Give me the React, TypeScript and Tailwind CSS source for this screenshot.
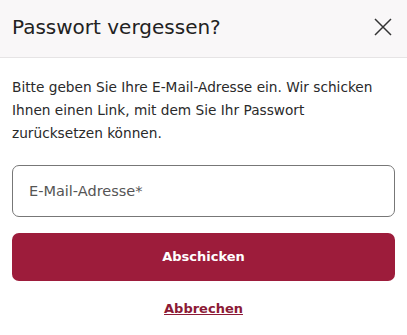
import React from 'react'

const font = { fontFamily: '"DejaVu Sans", "Noto Sans", sans-serif' }

export default function App() {
  return (
    <div className="w-[407px] h-[335px] bg-white text-[#222]" style={font}>
      <div className="h-[58px] bg-[#f9f7f8] border-b border-[#e6e4e5] flex items-center justify-between pl-3 pr-[14px]">
        <h1 className="text-[20px] text-[#222] font-normal -mt-[3px]">Passwort vergessen?</h1>
        <button aria-label="Schließen" className="text-[#333] -mt-[3px]">
          <svg width="20" height="20" viewBox="0 0 20 20" fill="none" stroke="currentColor" strokeWidth="1.5">
            <path d="M2 2 L18 18 M18 2 L2 18" />
          </svg>
        </button>
      </div>
      <div className="px-3 pt-[18px]">
        <p className="text-[13.7px] leading-[23px] text-[#2a2a2a]">
          Bitte geben Sie Ihre E-Mail-Adresse ein. Wir schicken Ihnen einen Link, mit dem Sie Ihr Passwort zurücksetzen können.
        </p>
        <input
          placeholder="E-Mail-Adresse*"
          className="mt-[20px] w-full h-[52px] rounded-[7px] border border-[#777] px-4 text-[14.5px] placeholder:text-[#555] outline-none"
        />
        <button className="mt-[16px] w-full h-[48px] rounded-[7px] bg-[#9d1c3b] text-white text-[13px] font-bold">
          Abschicken
        </button>
        <div className="mt-[15px] text-center">
          <a href="#" className="text-[13px] font-bold text-[#8c1a36] underline">Abbrechen</a>
        </div>
      </div>
    </div>
  )
}
